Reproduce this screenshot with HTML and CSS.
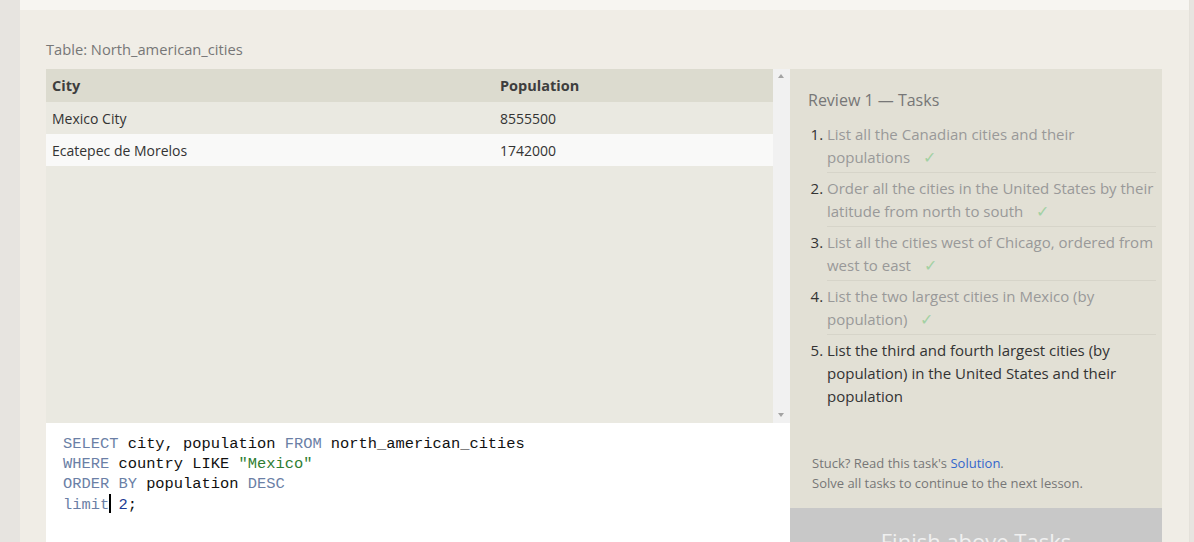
FILE: index.html
```html
<!DOCTYPE html>
<html>
<head>
<meta charset="utf-8">
<link rel="stylesheet" href="styles.css">
</head>
<body>
<div class="page">
  <div class="topstrip"></div>
  <div class="card">
    <div class="table-label">Table: North_american_cities</div>
    <div class="main">
      <div class="left">
        <div class="results">
          <div class="table-wrap">
            <table class="data">
              <thead>
                <tr><th class="c1">City</th><th>Population</th></tr>
              </thead>
              <tbody>
                <tr class="odd"><td class="c1">Mexico City</td><td>8555500</td></tr>
                <tr class="even"><td class="c1">Ecatepec de Morelos</td><td>1742000</td></tr>
              </tbody>
            </table>
          </div>
          <div class="scrollbar">
            <span class="arrow up"></span>
            <span class="arrow down"></span>
          </div>
        </div>
        <div class="editor">
          <div class="line"><span class="kw">SELECT</span> city, population <span class="kw">FROM</span> north_american_cities</div>
          <div class="line"><span class="kw">WHERE</span> country LIKE <span class="str">"Mexico"</span></div>
          <div class="line"><span class="kw">ORDER BY</span> population <span class="kw">DESC</span></div>
          <div class="line"><span class="kw">limit</span><span class="cursor"></span> <span class="num">2</span>;</div>
        </div>
      </div>
      <div class="right">
        <div class="tasks">
          <div class="tasks-title">Review 1 — Tasks</div>
          <ol class="task-list">
            <li class="done"><span class="txt">List all the Canadian cities and their populations</span><span class="check">✓</span></li>
            <li class="done"><span class="txt">Order all the cities in the United States by their latitude from north to south</span><span class="check">✓</span></li>
            <li class="done"><span class="txt">List all the cities west of Chicago, ordered from west to east</span><span class="check">✓</span></li>
            <li class="done"><span class="txt">List the two largest cities in Mexico (by population)</span><span class="check">✓</span></li>
            <li class="current"><span class="txt">List the third and fourth largest cities (by population) in the United States and their population</span></li>
          </ol>
          <div class="hint">
            <div>Stuck? Read this task's <span class="link">Solution</span>.</div>
            <div>Solve all tasks to continue to the next lesson.</div>
          </div>
        </div>
        <div class="finish">Finish above Tasks</div>
      </div>
    </div>
  </div>
</div>
</body>
</html>
```

FILE: styles.css
```css
html, body {
  margin: 0;
  padding: 0;
  height: 542px;
  overflow: hidden;
}
body {
  background: #e7e4e0;
  font-family: "Open Sans", "Noto Sans", sans-serif;
}
.page {
  margin-left: 20px;
  margin-right: 4px;
  background: #f0ede6;
  height: 542px;
  border-right: 1px solid #e4e1da;
  overflow: hidden;
}
.topstrip {
  height: 10px;
  background: #f7f5f1;
}
.card {
  padding: 28px 27px 0 26px;
}
.table-label {
  font-size: 14.7px;
  color: #777;
  line-height: 22px;
  height: 22px;
  margin-bottom: 9px;
}
.main {
  display: flex;
}
.left {
  width: 744px;
  display: flex;
  flex-direction: column;
}
.results {
  height: 354px;
  display: flex;
  background: #eae9e1;
}
.table-wrap {
  flex: 1;
}
.data {
  width: 100%;
  border-collapse: collapse;
  font-size: 14px;
  color: #333;
}
.data th {
  text-align: left;
  background: #dcdbcf;
  height: 33px;
  padding: 0 6px;
  font-weight: 700;
  color: #3e3e3e;
  font-size: 14.5px;
}
.data td {
  height: 32px;
  padding: 0 6px;
}
.data .c1 {
  width: 436px;
}
.data tr.odd td {
  background: #eae9e1;
}
.data tr.even td {
  background: #f9f9f8;
}
.scrollbar {
  width: 17px;
  background: #f1f1f1;
  position: relative;
}
.arrow {
  position: absolute;
  left: 5px;
  width: 0;
  height: 0;
  border-left: 3.5px solid transparent;
  border-right: 3.5px solid transparent;
}
.arrow.up {
  top: 5px;
  border-bottom: 4px solid #a3a3a3;
}
.arrow.down {
  bottom: 6px;
  border-top: 4px solid #a3a3a3;
}
.editor {
  background: #fff;
  height: 119px;
  box-sizing: border-box;
  padding: 11px 0 0 17px;
  font-family: "Liberation Mono", "DejaVu Sans Mono", monospace;
  font-size: 15.4px;
  line-height: 20px;
  color: #111;
}
.line {
  white-space: pre;
}
.kw {
  color: #6b7fa6;
}
.str {
  color: #2e7d32;
}
.num {
  color: #1c3a94;
}
.cursor {
  display: inline-block;
  width: 2px;
  height: 19px;
  background: #000;
  vertical-align: -4px;
  margin-right: -2px;
}
.right {
  width: 372px;
  display: flex;
  flex-direction: column;
}
.tasks {
  background: #e2e0d5;
  height: 439px;
  padding: 20px 6px 15px 18px;
  box-sizing: border-box;
  display: flex;
  flex-direction: column;
}
.tasks-title {
  font-size: 16px;
  color: #777;
  line-height: 22px;
  margin-bottom: 12px;
}
.task-list {
  margin: 0;
  padding: 0 0 0 19px;
  font-size: 15px;
  line-height: 23px;
}
.task-list li {
  border-bottom: 1px solid #d6d4c9;
  padding: 0 0 3px 0;
  margin-bottom: 4px;
  color: #333;
}
.task-list li:last-child {
  border-bottom: none;
}
.task-list li.done .txt {
  color: #999;
}
.check {
  color: #a3d1a3;
  margin-left: 13px;
  font-size: 16px;
}
.hint {
  margin-top: auto;
  font-size: 13px;
  line-height: 20px;
  color: #777;
  padding-left: 4px;
}
.link {
  color: #3366cc;
}
.finish {
  background: #c8c8c8;
  color: #f0f0f0;
  height: 34px;
  overflow: hidden;
  font-size: 22px;
  text-align: center;
  line-height: 60px;
  padding-top: 3px;
  box-sizing: border-box;
}
```
